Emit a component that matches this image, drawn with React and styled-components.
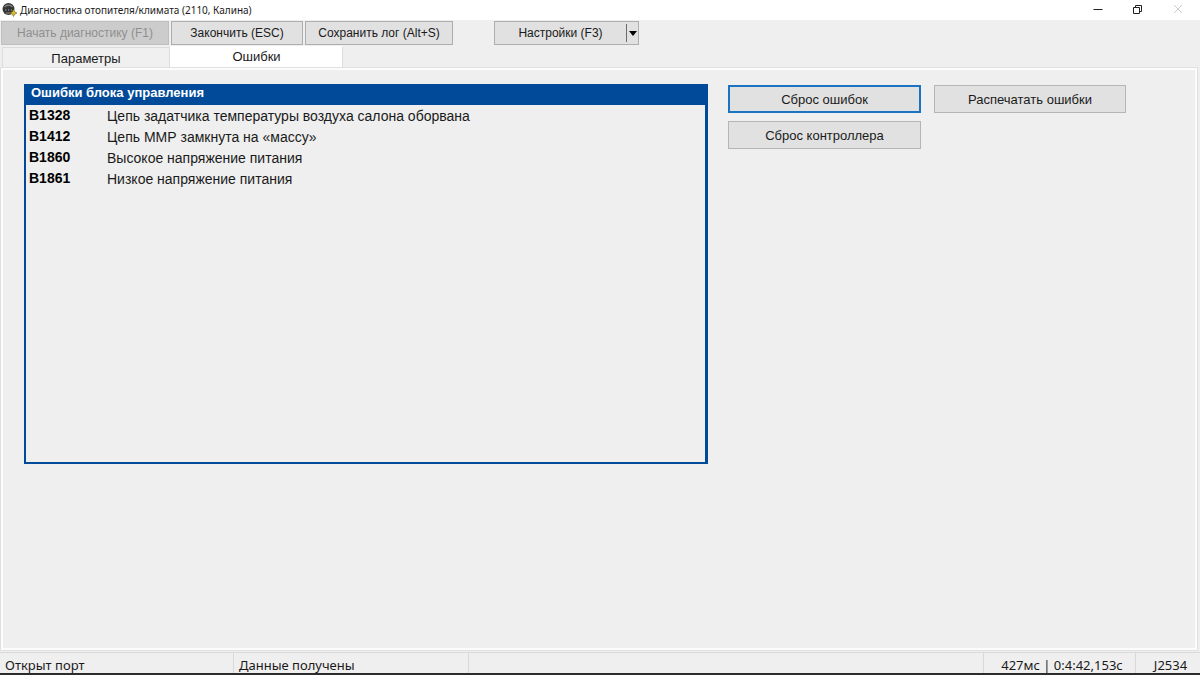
import React, { useState } from 'react';
import styled, { createGlobalStyle } from 'styled-components';

const errors = [
    { code: 'B1328', text: 'Цепь задатчика температуры воздуха салона оборвана' },
    { code: 'B1412', text: 'Цепь ММР замкнута на «массу»' },
    { code: 'B1860', text: 'Высокое напряжение питания' },
    { code: 'B1861', text: 'Низкое напряжение питания' },
];

const tabs = [
    { id: 'params', label: 'Параметры' },
    { id: 'errors', label: 'Ошибки' },
];

export default function App() {
    const [tab, setTab] = useState('errors');

    return (
        <>
            <GlobalStyle />
            <Window>
                <TitleBar>
                    <AppIcon />
                    <Title>Диагностика отопителя/климата (2110, Калина)</Title>
                    <WindowButton aria-label="Свернуть">
                        <svg width="10" height="10" viewBox="0 0 10 10">
                            <path d="M0.5 4.5h9" stroke="#222" fill="none" />
                        </svg>
                    </WindowButton>
                    <WindowButton aria-label="Восстановить">
                        <svg width="10" height="10" viewBox="0 0 10 10">
                            <path d="M0.5 2.5h6v6h-6zM2.5 2.5v-2h6v6h-2" stroke="#222" fill="none" />
                        </svg>
                    </WindowButton>
                    <WindowButton aria-label="Закрыть" disabled>
                        <svg width="10" height="10" viewBox="0 0 10 10">
                            <path d="M1 0l8 8M9 0l-8 8" stroke="#ccc" fill="none" />
                        </svg>
                    </WindowButton>
                </TitleBar>

                <Toolbar>
                    <ToolButton $width={168} disabled>Начать диагностику (F1)</ToolButton>
                    <ToolButton $width={132}>Закончить (ESC)</ToolButton>
                    <ToolButton $width={148}>Сохранить лог (Alt+S)</ToolButton>
                    <SplitButton>
                        <SplitMain>Настройки (F3)</SplitMain>
                        <SplitArrow aria-label="Меню настроек">
                            <svg width="8" height="5" viewBox="0 0 8 5">
                                <path d="M0 0h8l-4 5z" fill="#000" />
                            </svg>
                        </SplitArrow>
                    </SplitButton>
                </Toolbar>

                <TabList role="tablist">
                    {tabs.map(({ id, label }) => (
                        <Tab key={id} role="tab" aria-selected={tab === id} $active={tab === id} onClick={() => setTab(id)}>
                            {label}
                        </Tab>
                    ))}
                </TabList>

                <Page>
                    <ErrorBox>
                        <ErrorTable>
                            <thead>
                                <tr>
                                    <th colSpan={2}>Ошибки блока управления</th>
                                </tr>
                            </thead>
                            <tbody>
                                {errors.map(({ code, text }) => (
                                    <tr key={code}>
                                        <Code>{code}</Code>
                                        <Description>{text}</Description>
                                    </tr>
                                ))}
                            </tbody>
                        </ErrorTable>
                    </ErrorBox>
                    <Actions>
                        <ActionButton $primary>Сброс ошибок</ActionButton>
                        <ActionButton>Распечатать ошибки</ActionButton>
                        <ActionButton>Сброс контроллера</ActionButton>
                    </Actions>
                </Page>

                <StatusBar>
                    <StatusCell $width={234}>Открыт порт</StatusCell>
                    <StatusCell $width={235}>Данные получены</StatusCell>
                    <StatusCell $grow />
                    <StatusCell $width={152} $center>427мс | 0:4:42,153с</StatusCell>
                    <StatusCell $width={64} $center>J2534</StatusCell>
                </StatusBar>
            </Window>
        </>
    );
}

function AppIcon() {
    return (
        <svg width="16" height="16" viewBox="0 0 16 16" aria-hidden="true">
            <circle cx="6.5" cy="7" r="6" fill="#38383a" />
            <path d="M2.5 5c1.6-2.4 6.4-2.4 8 0" stroke="#858587" strokeWidth="1.2" fill="none" />
            <path d="M2.4 6.8h8.2v2.4H2.4z" fill="#1c1c1e" />
            <path d="M3 8h1.6M5.8 8h1.6M8.6 8h1.6" stroke="#c4c4c4" strokeWidth="1.2" />
            <path d="M4 11h4.5" stroke="#8d8d8d" />
            <path d="M11.5 7.5l1.2 2.3 2.3 1.2-2.3 1.2-1.2 2.3-1.2-2.3L8 11l2.3-1.2z" fill="#d8bd28" stroke="#5c5218" strokeWidth="0.5" />
        </svg>
    );
}

const GlobalStyle = createGlobalStyle`
    * {
        box-sizing: border-box;
    }

    body {
        margin: 0;
        background-color: #efefef;
        color: #1a1a1a;
        font-family: 'Liberation Sans', Arial, sans-serif;
    }

    button {
        padding: 0;
        border: none;
        border-radius: 0;
        color: inherit;
        font-family: inherit;
    }
`;

const Window = styled.div`
    display: flex;
    flex-direction: column;
    min-height: 100vh;
    border-bottom: 2px solid #2c2c2c;
`;

const TitleBar = styled.header`
    display: flex;
    align-items: center;
    height: 20px;
    padding: 0 2px;
    background-color: #fff;
`;

const Title = styled.h1`
    flex: 1;
    margin: 0 0 0 2px;
    font-family: 'Noto Sans', 'Open Sans', sans-serif;
    font-size: 10px;
    font-weight: 400;
    line-height: 20px;
`;

const WindowButton = styled.button`
    display: flex;
    align-items: center;
    justify-content: center;
    width: 40px;
    height: 18px;
    background: none;
`;

const Toolbar = styled.div`
    display: flex;
    gap: 2px;
    padding: 1px;
`;

const ToolButton = styled.button`
    width: ${({ $width }) => $width}px;
    height: 24px;
    border: 1px solid #adadad;
    background-color: #e1e1e1;
    font-size: 12px;

    &:disabled {
        border-color: #bfbfbf;
        background-color: #cccccc;
        color: #8f8f8f;
    }
`;

const SplitButton = styled.div`
    display: flex;
    width: 145px;
    height: 24px;
    margin-left: 39px;
    border: 1px solid #adadad;
    background-color: #e1e1e1;
`;

const SplitMain = styled.button`
    flex: 1;
    background: none;
    font-size: 12px;
`;

const SplitArrow = styled.button`
    display: flex;
    align-items: center;
    justify-content: center;
    width: 12px;
    margin: 2px 0;
    border-left: 1px solid #6b6b6b;
    background: none;
`;

const TabList = styled.div`
    display: flex;
    align-items: flex-end;
    height: 22px;
    padding-left: 2px;
`;

const Tab = styled.button`
    width: ${({ $active }) => ($active ? 173 : 168)}px;
    height: ${({ $active }) => ($active ? 22 : 21)}px;
    padding-bottom: ${({ $active }) => ($active ? 2 : 0)}px;
    border: 1px solid ${({ $active }) => ($active ? '#fff' : '#dcdcdc')};
    border-right-color: #dcdcdc;
    border-bottom: none;
    background-color: ${({ $active }) => ($active ? '#fff' : '#f0f0f0')};
    font-size: 13px;
`;

const Page = styled.main`
    display: flex;
    flex: 1;
    align-items: flex-start;
    gap: 20px;
    margin: 0 3px 2px 1px;
    padding: 14px 69px 14px 21px;
    border: 2px solid #fcfcfc;
    outline: 1px solid #e0e0e0;
`;

const ErrorBox = styled.section`
    flex: 1;
    min-height: 380px;
    border: 2px solid #004a99;
    border-top: none;
    border-right-width: 3px;
`;

const ErrorTable = styled.table`
    width: 100%;
    border-collapse: collapse;

    th {
        height: 21px;
        padding: 0 5px 3px;
        background-color: #004a99;
        color: #fff;
        font-size: 13px;
        line-height: 18px;
        text-align: left;
    }
`;

const Code = styled.td`
    width: 78px;
    height: 21px;
    padding: 0 0 1px 3px;
    color: #000;
    font-size: 14px;
    font-weight: 700;
    line-height: 20px;
`;

const Description = styled.td`
    padding: 1px 0 0 3px;
    font-size: 14px;
    line-height: 20px;
`;

const Actions = styled.div`
    display: grid;
    grid-template-columns: 193px 192px;
    gap: 8px 13px;
    padding-top: 1px;
`;

const ActionButton = styled.button`
    height: 28px;
    border: ${({ $primary }) => ($primary ? '2px solid #1a74c0' : '1px solid #b5b5b5')};
    background-color: #e1e1e1;
    font-size: 13px;
`;

const StatusBar = styled.footer`
    display: flex;
    height: 21px;
    border-top: 1px solid #d9d9d9;
    font-family: 'Noto Sans', 'Open Sans', sans-serif;
    font-size: 13px;
    line-height: 24px;
`;

const StatusCell = styled.div`
    flex: ${({ $grow, $width }) => ($grow ? '1' : `0 0 ${$width}px`)};
    padding-left: 5px;
    border-right: 1px solid #d9d9d9;
    text-align: ${({ $center }) => ($center ? 'center' : 'left')};
    white-space: nowrap;

    &:last-child {
        border-right: none;
    }
`;
